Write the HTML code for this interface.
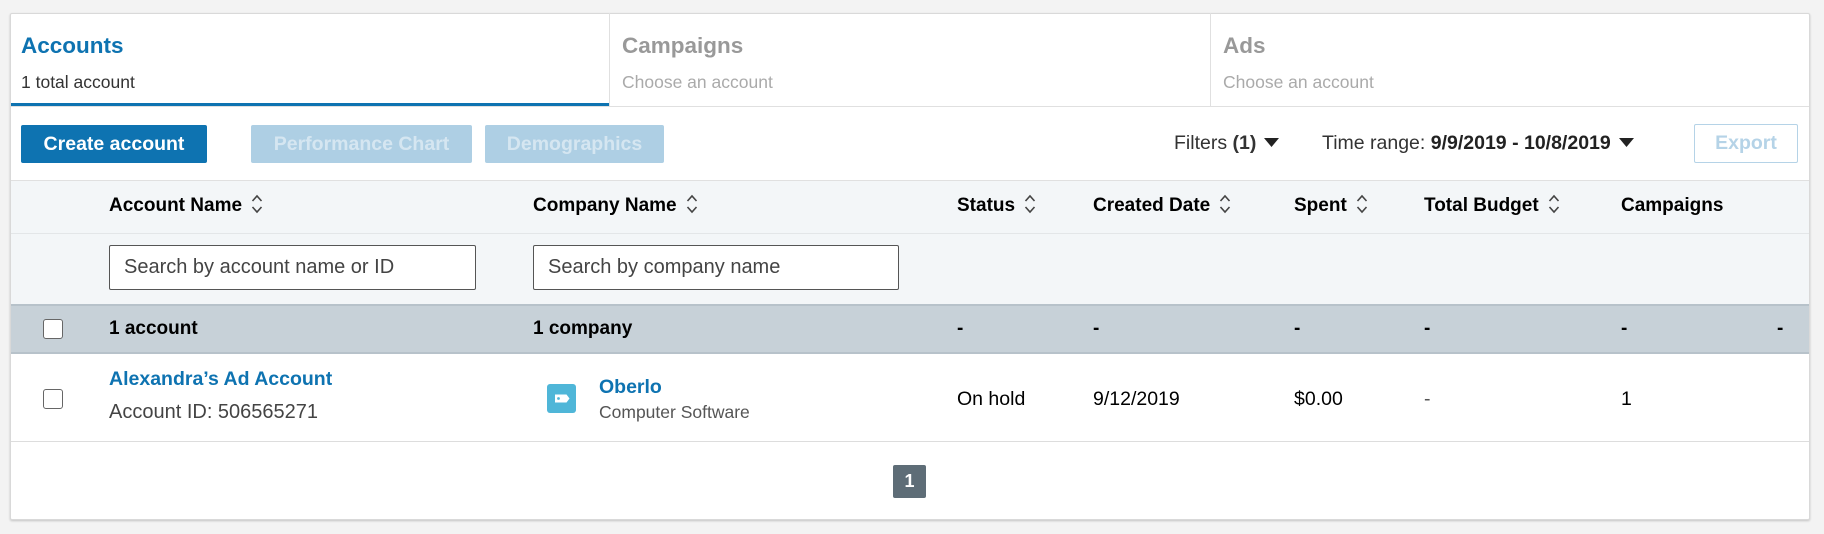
<!DOCTYPE html>
<html><head><style>
*{box-sizing:border-box;margin:0;padding:0}
body{width:1824px;height:534px;background:#f3f3f3;font-family:"Liberation Sans",sans-serif;color:#000;position:relative;overflow:hidden}
.a{position:absolute;white-space:nowrap}
.card{position:absolute;left:10px;top:13px;width:1800px;height:507px;background:#fff;border:1px solid #d9d9d9;box-shadow:0 1px 2px rgba(0,0,0,.2);border-radius:2px}
.b{font-weight:bold}
.sort{display:inline-block;vertical-align:middle;margin-left:9px;margin-top:-3px}
.cb{position:absolute;width:20px;height:20px;border:1px solid #666;border-radius:3px;background:#fff}
.tri{display:inline-block;vertical-align:middle;margin-left:8px;margin-top:-2px}
</style></head><body>
<div class="card"></div>
<!-- tabs -->
<div class="a" style="left:609px;top:13px;width:1px;height:94px;background:#e0e0e0"></div>
<div class="a" style="left:1210px;top:13px;width:1px;height:94px;background:#e0e0e0"></div>
<div class="a" style="left:11px;top:106px;width:1798px;height:1px;background:#e0e0e0"></div>
<div class="a" style="left:11px;top:103px;width:598px;height:3px;background:#0e73b1"></div>
<div class="a" style="left:21px;top:33px;font-size:22.5px;color:#0e73b1;font-weight:bold">Accounts</div>
<div class="a" style="left:21px;top:72px;font-size:17.5px;color:#333">1 total account</div>
<div class="a" style="left:622px;top:33px;font-size:22.5px;color:#999;font-weight:bold">Campaigns</div>
<div class="a" style="left:622px;top:72px;font-size:17.5px;color:#aaa">Choose an account</div>
<div class="a" style="left:1223px;top:33px;font-size:22.5px;color:#999;font-weight:bold">Ads</div>
<div class="a" style="left:1223px;top:72px;font-size:17.5px;color:#aaa">Choose an account</div>
<!-- toolbar -->
<div class="a b" style="left:21px;top:125px;width:186px;height:38px;background:#0e73b1;color:#fff;font-size:19.5px;line-height:38px;text-align:center;border-radius:2px">Create account</div>
<div class="a b" style="left:251px;top:125px;width:221px;height:38px;background:#aecfe4;color:#d5e6f1;font-size:19.5px;line-height:38px;text-align:center;border-radius:2px">Performance Chart</div>
<div class="a b" style="left:485px;top:125px;width:179px;height:38px;background:#aecfe4;color:#d5e6f1;font-size:19.5px;line-height:38px;text-align:center;border-radius:2px">Demographics</div>
<div class="a" style="left:1174px;top:132px;font-size:19.5px;color:#333">Filters <b>(1)</b><svg class="tri" width="15" height="9" viewBox="0 0 15 9"><path d="M0 0h15L7.5 9z" fill="#222"/></svg></div>
<div class="a" style="left:1322px;top:132px;font-size:19.5px;color:#333">Time range: <b style="color:#222">9/9/2019 - 10/8/2019</b><svg class="tri" width="15" height="9" viewBox="0 0 15 9"><path d="M0 0h15L7.5 9z" fill="#222"/></svg></div>
<div class="a b" style="left:1694px;top:124px;width:104px;height:39px;border:1px solid #b5d3e7;color:#b5d3e7;font-size:19.5px;line-height:37px;text-align:center;border-radius:2px">Export</div>
<!-- header -->
<div class="a" style="left:11px;top:180px;width:1798px;height:124px;background:#f3f6f8;border-top:1px solid #e0e0e0"></div>
<div class="a" style="left:11px;top:233px;width:1798px;height:1px;background:#e3e6e8"></div>
<div class="a b" style="left:109px;top:195px;font-size:19px">Account Name<svg class="sort" width="12" height="22" viewBox="0 0 12 22"><path d="M1.5 8l4.5-5 4.5 5M1.5 14l4.5 5 4.5-5" fill="none" stroke="#444" stroke-width="1.6"/></svg></div>
<div class="a b" style="left:533px;top:195px;font-size:19px">Company Name<svg class="sort" width="12" height="22" viewBox="0 0 12 22"><path d="M1.5 8l4.5-5 4.5 5M1.5 14l4.5 5 4.5-5" fill="none" stroke="#444" stroke-width="1.6"/></svg></div>
<div class="a b" style="left:957px;top:195px;font-size:19px">Status<svg class="sort" width="12" height="22" viewBox="0 0 12 22"><path d="M1.5 8l4.5-5 4.5 5M1.5 14l4.5 5 4.5-5" fill="none" stroke="#444" stroke-width="1.6"/></svg></div>
<div class="a b" style="left:1093px;top:195px;font-size:19px">Created Date<svg class="sort" width="12" height="22" viewBox="0 0 12 22"><path d="M1.5 8l4.5-5 4.5 5M1.5 14l4.5 5 4.5-5" fill="none" stroke="#444" stroke-width="1.6"/></svg></div>
<div class="a b" style="left:1294px;top:195px;font-size:19px">Spent<svg class="sort" width="12" height="22" viewBox="0 0 12 22"><path d="M1.5 8l4.5-5 4.5 5M1.5 14l4.5 5 4.5-5" fill="none" stroke="#444" stroke-width="1.6"/></svg></div>
<div class="a b" style="left:1424px;top:195px;font-size:19px">Total Budget<svg class="sort" width="12" height="22" viewBox="0 0 12 22"><path d="M1.5 8l4.5-5 4.5 5M1.5 14l4.5 5 4.5-5" fill="none" stroke="#444" stroke-width="1.6"/></svg></div>
<div class="a b" style="left:1621px;top:195px;font-size:19px">Campaigns</div>
<div class="a" style="left:109px;top:245px;width:367px;height:45px;background:#fff;border:1px solid #555;border-radius:2px;font-size:20px;color:#444;line-height:43px;padding-left:14px">Search by account name or ID</div>
<div class="a" style="left:533px;top:245px;width:366px;height:45px;background:#fff;border:1px solid #555;border-radius:2px;font-size:20px;color:#444;line-height:43px;padding-left:14px">Search by company name</div>
<!-- summary -->
<div class="a" style="left:11px;top:304px;width:1798px;height:50px;background:#c7d1d8;border-top:2px solid #b7c2ca;border-bottom:2px solid #b7c2ca"></div>
<div class="cb" style="left:43px;top:319px"></div>
<div class="a b" style="left:109px;top:318px;font-size:19px">1 account</div>
<div class="a b" style="left:533px;top:318px;font-size:19px">1 company</div>
<div class="a b" style="left:957px;top:318px;font-size:19px">-</div>
<div class="a b" style="left:1093px;top:318px;font-size:19px">-</div>
<div class="a b" style="left:1294px;top:318px;font-size:19px">-</div>
<div class="a b" style="left:1424px;top:318px;font-size:19px">-</div>
<div class="a b" style="left:1621px;top:318px;font-size:19px">-</div>
<div class="a b" style="left:1777px;top:318px;font-size:19px">-</div>
<!-- data -->
<div class="cb" style="left:43px;top:389px"></div>
<div class="a b" style="left:109px;top:368px;font-size:19.5px;color:#0e73b1">Alexandra’s Ad Account</div>
<div class="a" style="left:109px;top:401px;font-size:20px;color:#444">Account ID: 506565271</div>
<div class="a" style="left:547px;top:384px;width:29px;height:29px;background:#4fb6d8;border-radius:3px"><svg width="29" height="29" viewBox="0 0 29 29"><path d="M8 10.5h11.5l3 4-3 4H8z" fill="#fff"/><circle cx="11.5" cy="14.5" r="1.4" fill="#4fb6d8"/></svg></div>
<div class="a b" style="left:599px;top:376px;font-size:19.5px;color:#0e73b1">Oberlo</div>
<div class="a" style="left:599px;top:402px;font-size:17.5px;color:#555">Computer Software</div>
<div class="a" style="left:957px;top:388px;font-size:19.5px">On hold</div>
<div class="a" style="left:1093px;top:388px;font-size:19.5px">9/12/2019</div>
<div class="a" style="left:1294px;top:388px;font-size:19.5px">$0.00</div>
<div class="a" style="left:1424px;top:388px;font-size:19.5px;color:#555">-</div>
<div class="a" style="left:1621px;top:388px;font-size:19.5px">1</div>
<div class="a" style="left:11px;top:441px;width:1798px;height:1px;background:#ddd"></div>
<div class="a b" style="left:893px;top:465px;width:33px;height:33px;background:#5e6d77;color:#fff;font-size:18px;line-height:33px;text-align:center;border-radius:2px">1</div>
</body></html>
